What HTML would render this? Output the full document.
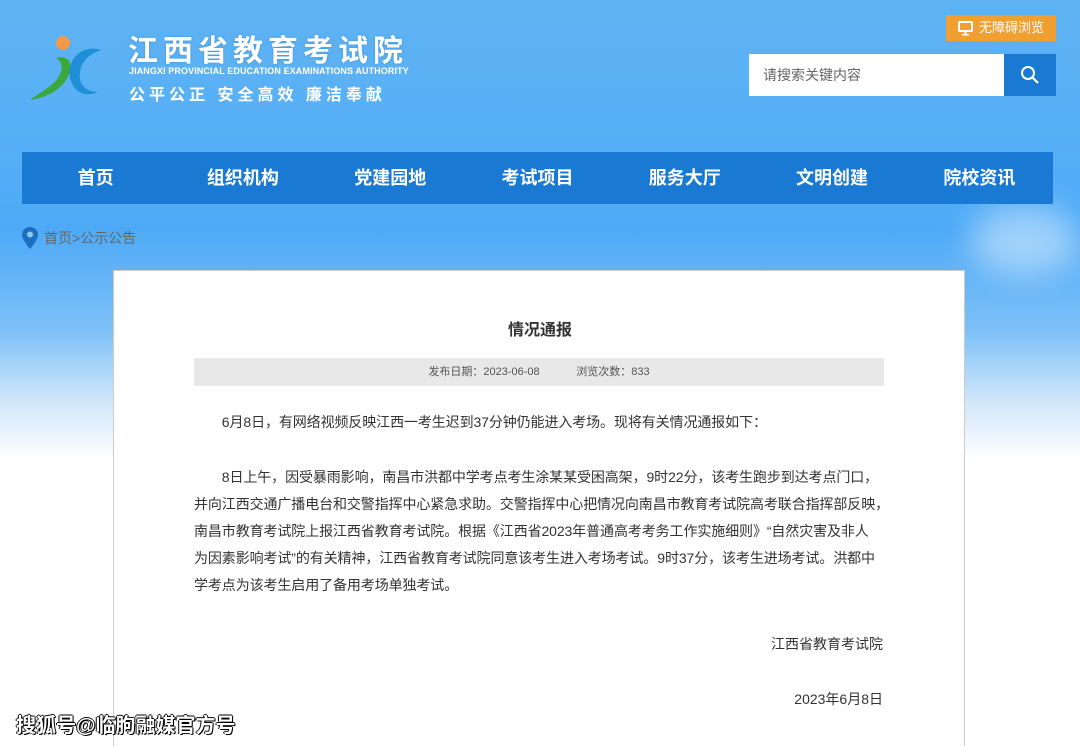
<!DOCTYPE html>
<html><head><meta charset="utf-8">
<style>
*{margin:0;padding:0;box-sizing:border-box}
html{background:#fff;width:1080px;height:746px;overflow:hidden}
body{width:1080px;height:746px;overflow:hidden;position:relative;font-family:"Liberation Sans","Noto Sans CJK SC",sans-serif;
background:linear-gradient(180deg,#5fb2f2 0px,#58b0f6 120px,#4eaaf7 230px,#7cc0f7 330px,#cfe6fb 400px,#fff 460px,#fff 746px);}
.cloud{position:absolute;border-radius:50%;background:rgba(255,255,255,.45);filter:blur(16px)}
.logo-t{position:absolute;left:128px;top:26px;color:#fff;font-size:30px;font-weight:bold;letter-spacing:5px;text-shadow:0 0 2px #3a8fd8}
.logo-e{position:absolute;left:129px;top:66px;color:#fff;font-size:9px;font-weight:bold;letter-spacing:0.1px}
.logo-s{position:absolute;left:129px;top:81px;color:#fff;font-size:16px;font-weight:bold;letter-spacing:4px}
.acc{position:absolute;left:946px;top:15px;width:110px;height:26px;background:#f0a030;color:#fff;font-size:13px;line-height:26px;padding-left:33px}
.search{position:absolute;left:749px;top:54px;width:255px;height:42px;background:#fff;color:#666;font-size:14px;line-height:42px;padding-left:14px}
.sbtn{position:absolute;left:1004px;top:54px;width:52px;height:42px;background:#1a79d2}
.nav{position:absolute;left:22px;top:152px;width:1031px;height:52px;background:#1a79d2;display:flex}
.nav div{flex:1;color:#fff;font-size:18px;font-weight:bold;text-align:center;line-height:52px}
.crumb{position:absolute;left:44px;top:228px;color:#666;font-size:14px}
.box{position:absolute;left:113px;top:270px;width:852px;height:476px;background:#fff;border:1px solid #ccc;border-bottom:none}
.title{position:absolute;left:0;width:100%;top:316px;text-align:center;font-size:16px;font-weight:bold;color:#333}
.meta{position:absolute;left:194px;top:358px;width:690px;height:28px;background:#e8e8e8;color:#555;font-size:11px;line-height:28px;text-align:center}
.p{position:absolute;left:194px;width:720px;font-size:14px;color:#333;line-height:27px;white-space:nowrap;letter-spacing:-0.1px}
.r{position:absolute;right:197px;font-size:14px;color:#333}
.wm{position:absolute;left:16px;top:709px;font-size:20px;font-weight:bold;color:#fff;text-shadow:1px 1px 0 #000,-1px 0 0 #000,0 -1px 0 #000,1px 0 0 #000}
</style></head><body>
<div class="cloud" style="left:970px;top:205px;width:110px;height:70px"></div>
<svg style="position:absolute;left:26px;top:28px" width="86" height="76" viewBox="0 0 86 76">
<circle cx="37" cy="15" r="7" fill="#f39a4a"/>
<path d="M30 30 C46 26 48 40 40 52 C32 64 18 70 4 72 C18 62 30 56 34 46 C38 38 34 32 30 30Z" fill="#3aa83a"/>
<path d="M75 22 C58 16 40 30 44 50 C47 64 60 70 72 64 C60 64 52 56 54 44 C56 32 64 26 75 22Z" fill="#1f8fd8"/>
</svg>
<div class="logo-t">江西省教育考试院</div>
<div class="logo-e">JIANGXI PROVINCIAL EDUCATION EXAMINATIONS AUTHORITY</div>
<div class="logo-s">公平公正 安全高效 廉洁奉献</div>
<div class="acc"><svg style="position:absolute;left:12px;top:6px" width="15" height="15" viewBox="0 0 15 15"><rect x="1" y="1" width="13" height="9" rx="1" fill="none" stroke="#fff" stroke-width="2"/><rect x="6.5" y="10" width="2" height="3" fill="#fff"/><rect x="4" y="13" width="7" height="1.5" fill="#fff"/></svg>无障碍浏览</div>
<div class="search">请搜索关键内容</div>
<div class="sbtn"><svg style="position:absolute;left:16px;top:11px" width="20" height="20" viewBox="0 0 20 20"><circle cx="8" cy="8" r="6" fill="none" stroke="#fff" stroke-width="2"/><path d="M12.5 12.5L18 18" stroke="#fff" stroke-width="2.2"/></svg></div>
<div class="nav"><div>首页</div><div>组织机构</div><div>党建园地</div><div>考试项目</div><div>服务大厅</div><div>文明创建</div><div>院校资讯</div></div>
<svg style="position:absolute;left:22px;top:227px" width="16" height="22" viewBox="0 0 16 22"><path d="M8 0C3.6 0 0 3.4 0 7.8 0 13 8 22 8 22S16 13 16 7.8C16 3.4 12.4 0 8 0Z" fill="#1a6fc0"/><circle cx="8" cy="7.5" r="3" fill="#8ec8f5"/></svg>
<div class="crumb">首页&gt;公示公告</div>
<div class="box"></div>
<div class="title">情况通报</div>
<div class="meta">发布日期：2023-06-08 &nbsp;&nbsp;&nbsp;&nbsp;&nbsp;&nbsp;&nbsp;&nbsp;&nbsp;&nbsp; 浏览次数：833</div>
<div class="p" style="top:409px">&emsp;&emsp;6月8日，有网络视频反映江西一考生迟到37分钟仍能进入考场。现将有关情况通报如下：</div>
<div class="p" style="top:464px">&emsp;&emsp;8日上午，因受暴雨影响，南昌市洪都中学考点考生涂某某受困高架，9时22分，该考生跑步到达考点门口，<br>并向江西交通广播电台和交警指挥中心紧急求助。交警指挥中心把情况向南昌市教育考试院高考联合指挥部反映，<br>南昌市教育考试院上报江西省教育考试院。根据《江西省2023年普通高考考务工作实施细则》“自然灾害及非人<br>为因素影响考试”的有关精神，江西省教育考试院同意该考生进入考场考试。9时37分，该考生进场考试。洪都中<br>学考点为该考生启用了备用考场单独考试。</div>
<div class="r" style="top:634px">江西省教育考试院</div>
<div class="r" style="top:689px">2023年6月8日</div>
<div class="wm">搜狐号@临朐融媒官方号</div>
</body></html>
